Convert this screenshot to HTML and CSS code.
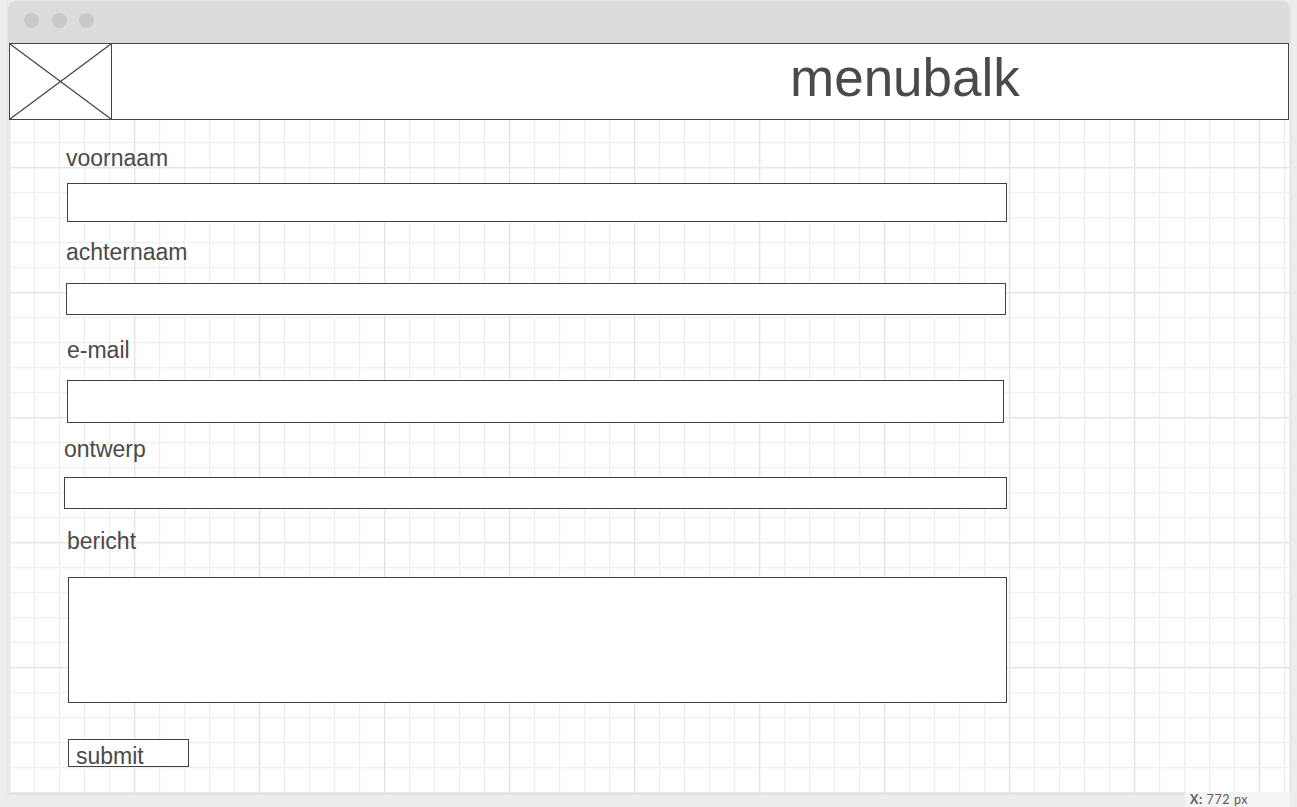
FILE: index.html
```html
<!DOCTYPE html>
<html lang="nl">
<head>
    <meta charset="UTF-8">
    <title>Contact wireframe</title>
    <link rel="stylesheet" href="styles.css">
</head>
<body>
    <div class="venster">
        <div class="titelbalk">
            <span class="stip"></span>
            <span class="stip"></span>
            <span class="stip"></span>
        </div>
        <header class="menubalk">
            <svg class="logo" width="101" height="75" viewBox="0 0 101 75">
                <line x1="0" y1="0" x2="101" y2="75"></line>
                <line x1="101" y1="0" x2="0" y2="75"></line>
            </svg>
            <h1 class="menutitel">menubalk</h1>
        </header>
        <form class="canvas" name="formContact" method="GET">
            <label class="label label-voornaam" for="voornaam">voornaam</label>
            <input class="veld veld-voornaam" id="voornaam" name="voornaam" type="text">

            <label class="label label-achternaam" for="achternaam">achternaam</label>
            <input class="veld veld-achternaam" id="achternaam" name="achternaam" type="text">

            <label class="label label-email" for="email">e-mail</label>
            <input class="veld veld-email" id="email" name="email" type="text">

            <label class="label label-ontwerp" for="ontwerp">ontwerp</label>
            <input class="veld veld-ontwerp" id="ontwerp" name="ontwerp" type="text">

            <label class="label label-bericht" for="bericht">bericht</label>
            <textarea class="veld veld-bericht" id="bericht" name="bericht"></textarea>

            <button class="verstuur" type="submit">submit</button>
        </form>
    </div>
    <div class="coordinaat"><b>X:</b> 772 px</div>
</body>
</html>
```

FILE: styles.css
```css
html, body
{
    height: 100%;
}
body
{
    margin: 0;
    overflow: hidden;
    background-color: #ededed;
    font-family: "Liberation Sans", Arial, sans-serif;
    color: #4a4a4a;
}
.venster
{
    width: 1282px;
    height: 792px;
    margin: 1px 0 0 8px;
    display: flex;
    flex-direction: column;
    box-shadow: 0 1px 3px rgba(0, 0, 0, 0.08);
}
.titelbalk
{
    height: 42px;
    flex: none;
    box-sizing: border-box;
    padding: 0 0 3px 16px;
    display: flex;
    align-items: center;
    gap: 12.5px;
    background-color: #dcdcdc;
    border-radius: 8px 8px 0 0;
}
.stip
{
    width: 15px;
    height: 15px;
    border-radius: 50%;
    background-color: #c9c9c9;
}
.menubalk
{
    height: 77px;
    flex: none;
    box-sizing: border-box;
    margin: 0 1px;
    display: flex;
    align-items: center;
    border: 1px solid #444444;
    background-color: #ffffff;
}
.logo
{
    flex: none;
    box-sizing: content-box;
    border-right: 1px solid #444444;
}
.logo line
{
    stroke: #444444;
    stroke-width: 1.3;
}
.menutitel
{
    margin: 0 0 8px 678px;
    font-size: 53px;
    font-weight: normal;
    line-height: 67px;
}
.canvas
{
    flex: 1;
    margin: 0 1px;
    padding-top: 26px;
    display: flex;
    flex-direction: column;
    align-items: flex-start;
    background-color: #ffffff;
    background-image:
        linear-gradient(to right, #e4e4e4 1px, #f4f4f4 1px, #f4f4f4 2px, transparent 2px),
        linear-gradient(to bottom, #e4e4e4 1px, #f4f4f4 1px, #f4f4f4 2px, transparent 2px),
        linear-gradient(to right, #efefef 1px, #fbfbfb 1px, #fbfbfb 2px, transparent 2px),
        linear-gradient(to bottom, #efefef 1px, #fbfbfb 1px, #fbfbfb 2px, transparent 2px);
    background-size: 125px 125px, 125px 125px, 25px 25px, 25px 25px;
    background-position: 0 0, 0 47px, 0 0, 0 22px;
}
.label
{
    display: block;
    padding-bottom: 2px;
    font-size: 23px;
    line-height: 24px;
}
.veld
{
    display: block;
    box-sizing: border-box;
    padding: 0;
    border: 1px solid #404040;
    border-radius: 0;
    outline: none;
    resize: none;
    background-color: #ffffff;
}
.label-voornaam
{
    margin-left: 57px;
}
.veld-voornaam
{
    margin: 11px 0 0 58px;
    width: 940px;
    height: 39px;
}
.label-achternaam
{
    margin: 18px 0 0 57px;
}
.veld-achternaam
{
    margin: 17px 0 0 57px;
    width: 940px;
    height: 32px;
}
.label-email
{
    margin: 23px 0 0 58px;
}
.veld-email
{
    margin: 16px 0 0 58px;
    width: 937px;
    height: 43px;
}
.label-ontwerp
{
    margin: 14px 0 0 55px;
}
.veld-ontwerp
{
    margin: 14px 0 0 55px;
    width: 943px;
    height: 32px;
}
.label-bericht
{
    margin: 20px 0 0 58px;
}
.veld-bericht
{
    margin: 22px 0 0 59px;
    width: 939px;
    height: 126px;
}
.verstuur
{
    margin: 36px 0 0 59px;
    width: 121px;
    height: 28px;
    box-sizing: border-box;
    padding: 3px 0 0 7px;
    border: 1px solid #404040;
    border-radius: 0;
    background-color: #ffffff;
    color: #4a4a4a;
    font-family: "Liberation Sans", Arial, sans-serif;
    font-size: 23px;
    line-height: 26px;
    text-align: left;
}
.coordinaat
{
    position: absolute;
    left: 1185px;
    top: 792px;
    width: 105px;
    height: 15px;
    box-sizing: border-box;
    padding-left: 5px;
    background-color: #f4f4f4;
    font-family: Lato, sans-serif;
    font-size: 12.5px;
    line-height: 15px;
    letter-spacing: 0.6px;
    color: #5a5a5a;
}
```
